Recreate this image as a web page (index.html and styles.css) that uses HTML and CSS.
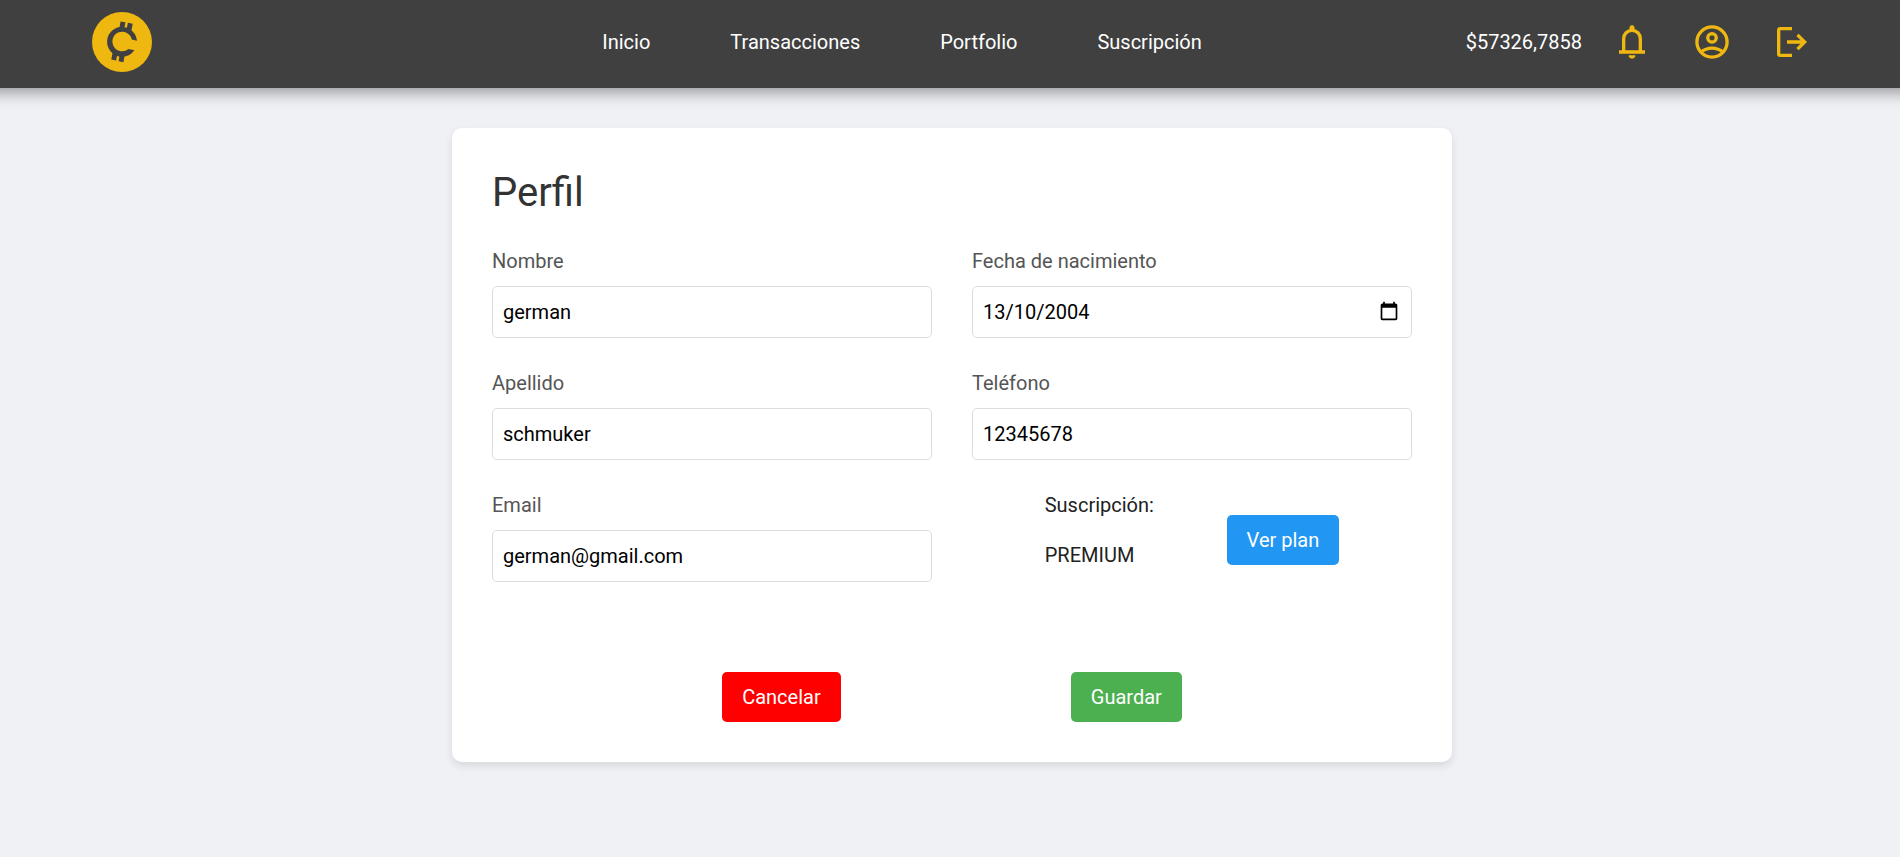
FILE: index.html
```html
<!DOCTYPE html>
<html lang="es">
<head>
<meta charset="utf-8">
<title>Perfil</title>
<link rel="stylesheet" href="styles.css">
</head>
<body>
<header class="header">
  <a class="logo" href="#" aria-label="Inicio">
    <svg width="60" height="60" viewBox="0 0 60 60">
      <circle cx="30" cy="30" r="30" fill="#efb810"/>
      <path d="M45 28.800A15 15 0 1 0 42.400 38.300L36.500 37A9.800 9.800 0 1 1 39.800 27.600Z" fill="#404040"/>
      <path d="M31 9.900l-1.300 7M38.300 11.300l-1.300 7M22.900 41.500l-1.200 6.500M30.200 43l-1.200 6.800" fill="none" stroke="#404040" stroke-width="4.900"/>
    </svg>
  </a>
  <nav class="nav">
    <a href="#">Inicio</a>
    <a href="#">Transacciones</a>
    <a href="#">Portfolio</a>
    <a href="#">Suscripción</a>
  </nav>
  <div class="account">
    <span class="balance">$57326,7858</span>
    <svg class="icon" viewBox="0 0 24 24">
      <path d="M4.200 18h15.600M7 18v-8a5 5 0 0 1 10 0v8"/>
      <path class="solid" d="M10.500 5V3.500a1.500 1.500 0 0 1 3 0V5zM10 20h4a2 2 0 0 1-4 0z"/>
    </svg>
    <svg class="icon" viewBox="0 0 24 24">
      <circle cx="12" cy="12" r="9.050"/>
      <circle cx="12" cy="9.500" r="2.550"/>
      <path d="M5.300 18.200a10.300 10.300 0 0 1 13.400 0"/>
    </svg>
    <svg class="icon" viewBox="0 0 24 24">
      <path d="M12 4H5A1 1 0 0 0 4 5v14A1 1 0 0 0 5 20h7M9 12h10.500M15.300 7.700L19.600 12l-4.300 4.300"/>
    </svg>
  </div>
</header>
<main class="card">
  <h1 class="title">Perfil</h1>
  <form class="form">
    <div class="fields">
      <div class="field"><label for="nombre">Nombre</label><input id="nombre" type="text" value="german"></div>
      <div class="field"><label for="fecha">Fecha de nacimiento</label>
        <div class="date"><input id="fecha" type="text" value="13/10/2004">
          <svg class="calendar" viewBox="0 0 24 24"><path d="M20 3h-1V1h-2v2H7V1H5v2H4c-1.100 0-2 .9-2 2v16c0 1.100.9 2 2 2h16c1.100 0 2-.9 2-2V5c0-1.100-.9-2-2-2zm0 18H4V8h16v13z"/></svg>
        </div>
      </div>
      <div class="field"><label for="apellido">Apellido</label><input id="apellido" type="text" value="schmuker"></div>
      <div class="field"><label for="telefono">Teléfono</label><input id="telefono" type="text" value="12345678"></div>
      <div class="field"><label for="email">Email</label><input id="email" type="text" value="german@gmail.com"></div>
      <div class="plan">
        <div class="plan-info"><p>Suscripción:</p><p>PREMIUM</p></div>
        <button type="button" class="btn btn-blue">Ver plan</button>
      </div>
    </div>
    <div class="actions">
      <button type="button" class="btn btn-red">Cancelar</button>
      <button type="button" class="btn btn-green">Guardar</button>
    </div>
  </form>
</main>
</body>
</html>
```
FILE: styles.css
```css
* { box-sizing: border-box; margin: 0; padding: 0; }
body {
  background: #f0f1f5;
  color: #212121;
  font-family: Roboto, "Liberation Sans", sans-serif;
  font-size: 20px;
  line-height: 30px;
  height: 857px;
  overflow: hidden;
}
.header {
  display: grid;
  grid-template-columns: 400px 1fr 500px;
  align-items: center;
  height: 88px;
  margin: 0 -20px;
  padding: 0 108px 4px 112px;
  background: #404040;
  box-shadow: 0 4px 15px rgba(0, 0, 0, 0.4);
}
.logo, .logo svg { display: block; width: 60px; height: 60px; }
.nav { display: flex; justify-content: center; gap: 80px; }
.nav a { color: #fff; text-decoration: none; }
.account { display: flex; justify-content: flex-end; align-items: center; gap: 40px; }
.balance { color: #fff; margin-right: -10px; }
.icon { width: 40px; height: 40px; fill: none; stroke: #efb810; stroke-width: 2; }
.icon .solid { fill: #efb810; stroke: none; }
.card {
  width: 1000px;
  height: 634px;
  margin: 40px 0 0 452px;
  padding: 40px;
  background: #fff;
  border-radius: 10px;
  box-shadow: 0 4px 8px rgba(0, 0, 0, 0.1);
}
.title { font-size: 40px; font-weight: 400; line-height: 50px; color: #333; margin-bottom: 28px; }
.fields { display: grid; grid-template-columns: 440px 440px; column-gap: 40px; row-gap: 30px; }
.field label { display: block; color: #555; margin-bottom: 10px; }
.field input {
  display: block;
  width: 100%;
  height: 52px;
  padding: 10px;
  border: 1px solid #ddd;
  border-radius: 5px;
  background: #fff;
  color: #000;
  font: inherit;
  outline: none;
}
.date { position: relative; }
.calendar { position: absolute; right: 13px; top: 15px; width: 20px; height: 20px; }
.plan { display: flex; justify-content: space-evenly; align-items: flex-start; }
.plan-info { display: grid; gap: 20px; }
.plan .btn { margin-top: 25px; }
.btn {
  height: 50px;
  padding: 0 20px;
  border: 0;
  border-radius: 5px;
  color: #fff;
  font: inherit;
}
.btn-blue { background: #2196f3; }
.btn-red { background: #f00; }
.btn-green { background: #4caf50; }
.actions { display: flex; justify-content: space-evenly; margin-top: 90px; }
```
